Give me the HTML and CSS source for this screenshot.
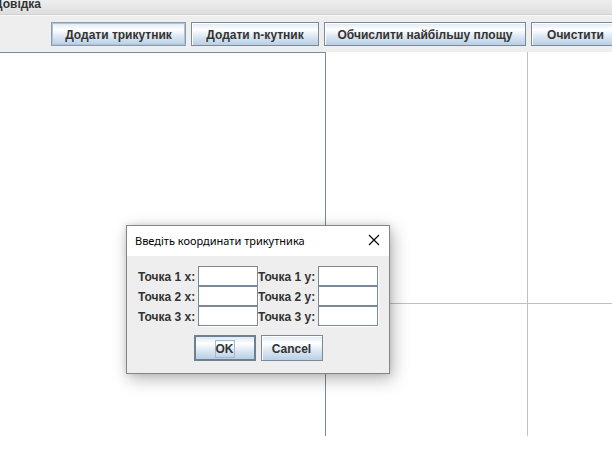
FILE: index.html
```html
<!DOCTYPE html>
<html lang="uk">
<head>
<meta charset="utf-8">
<title>Трикутники</title>
<link rel="stylesheet" href="styles.css">
</head>
<body>
<div class="window">
  <div class="menubar"><span class="menu">Довідка</span></div>
  <div class="toolbar">
    <button class="btn btn-rollover w-tri">Додати трикутник</button>
    <button class="btn w-ngon">Додати n-кутник</button>
    <button class="btn w-area">Обчислити найбільшу площу</button>
    <button class="btn w-clear">Очистити</button>
  </div>
  <div class="main">
    <div class="left-panel"></div>
    <div class="canvas">
      <svg class="axes" width="286" height="384" viewBox="0 0 286 384" shape-rendering="crispEdges">
        <line x1="201.5" y1="0" x2="201.5" y2="384" stroke="#c0c0c0" stroke-width="1"/>
        <line x1="0" y1="251.5" x2="286" y2="251.5" stroke="#c0c0c0" stroke-width="1"/>
      </svg>
    </div>
  </div>

  <div class="dialog">
    <div class="dialog-title">
      <span class="title-text">Введіть координати трикутника</span>
      <svg class="close" width="12" height="12" viewBox="0 0 12 12">
        <path d="M1 1 L11 11 M11 1 L1 11" stroke="#000" stroke-width="1.1" fill="none"/>
      </svg>
    </div>
    <div class="dialog-body">
      <div class="grid">
        <label class="lbl">Точка 1 x:</label><input class="field" type="text">
        <label class="lbl">Точка 1 y:</label><input class="field" type="text">
        <label class="lbl">Точка 2 x:</label><input class="field" type="text">
        <label class="lbl">Точка 2 y:</label><input class="field" type="text">
        <label class="lbl">Точка 3 x:</label><input class="field" type="text">
        <label class="lbl">Точка 3 y:</label><input class="field" type="text">
      </div>
      <div class="dialog-buttons">
        <button class="btn dbtn default"><span class="focus-rect">OK</span></button>
        <button class="btn dbtn">Cancel</button>
      </div>
    </div>
  </div>
</div>
</body>
</html>
```

FILE: styles.css
```css
* { box-sizing: border-box; }

html, body {
  margin: 0;
  padding: 0;
  background: #ffffff;
}

body {
  width: 612px;
  height: 455px;
  overflow: hidden;
  font-family: "Liberation Sans", Arial, sans-serif;
  font-size: 12px;
  color: #333333;
}

.window {
  position: relative;
  width: 612px;
  height: 455px;
}

.menubar {
  height: 15px;
  background: linear-gradient(#eeeeee, #dedede);
  border-bottom: 1px solid #d2d2d2;
  overflow: hidden;
}

.menu {
  display: block;
  margin-left: -6px;
  line-height: 8px;
  font-weight: bold;
  color: #333333;
  white-space: nowrap;
}

.toolbar {
  height: 37px;
  background: #eeeeee;
  border-top: 1px solid #f8f8f8;
  display: flex;
  gap: 5px;
  padding: 6px 0 0 51px;
  overflow: hidden;
}

.btn {
  flex: none;
  height: 24px;
  margin: 0;
  padding: 1px 0 0 0;
  font-family: "Liberation Sans", Arial, sans-serif;
  font-size: 12px;
  font-weight: bold;
  color: #333333;
  text-align: center;
  white-space: nowrap;
  border: 1px solid #7a8a99;
  box-shadow: inset 1px 1px 0 #ffffff;
  background: linear-gradient(#dde8f3 0%, #ffffff 30%, #dde8f3 60%, #b8cfe5 100%);
  cursor: default;
}

.btn-rollover {
  border-color: #8a9db0;
  box-shadow: inset 0 0 0 1px #aec3d7;
}

.w-tri { width: 135px; }
.w-ngon { width: 128px; }
.w-area { width: 202px; }
.w-clear { width: 89px; }

.main {
  display: flex;
  height: 384px;
}

.left-panel {
  width: 326px;
  flex: none;
  background: #ffffff;
  border-top: 1px solid #7a8a99;
  border-right: 1px solid #7a8a99;
}

.canvas {
  flex: 1;
  background: #ffffff;
  overflow: hidden;
}

.axes { display: block; }

.dialog {
  position: absolute;
  left: 126px;
  top: 225px;
  width: 264px;
  height: 149px;
  border: 1px solid #858585;
  background: #eeeeee;
  box-shadow: 3px 5px 16px rgba(0, 0, 0, 0.28), 0 0 6px rgba(0, 0, 0, 0.12);
}

.dialog-title {
  height: 30px;
  background: #ffffff;
  display: flex;
  align-items: center;
  justify-content: space-between;
  padding: 0 9px 0 8px;
}

.title-text {
  font-family: "Noto Sans", "Open Sans", sans-serif;
  font-size: 11px;
  color: #000000;
  padding-bottom: 2px;
}

.close { display: block; margin-bottom: 2px; }

.dialog-body {
  padding: 10px 0 0 11px;
}

.grid {
  display: grid;
  grid-template-columns: 60px 60px 60px 60px;
  grid-auto-rows: 20px;
}

.lbl {
  font-weight: bold;
  font-size: 12px;
  line-height: 20px;
  padding-top: 1px;
  color: #333333;
  white-space: nowrap;
}

.field {
  width: 60px;
  height: 20px;
  margin: 0;
  border: 1px solid #7a8a99;
  background: #ffffff;
  box-shadow: 1px 1px 0 #ffffff;
  font-family: "Liberation Sans", Arial, sans-serif;
  font-size: 12px;
  outline: none;
}

.dialog-buttons {
  display: flex;
  justify-content: center;
  gap: 5px;
  margin-top: 9px;
  margin-left: -11px;
}

.dbtn {
  width: 62px;
  height: 26px;
  display: flex;
  align-items: center;
  justify-content: center;
  padding: 1px 0 0 0;
}

.default {
  border: 2px solid #6f8090;
  box-shadow: none;
}

.focus-rect {
  display: block;
  width: 20px;
  height: 18px;
  line-height: 16px;
  border: 1px solid #a3b8cc;
  text-align: center;
}
```
